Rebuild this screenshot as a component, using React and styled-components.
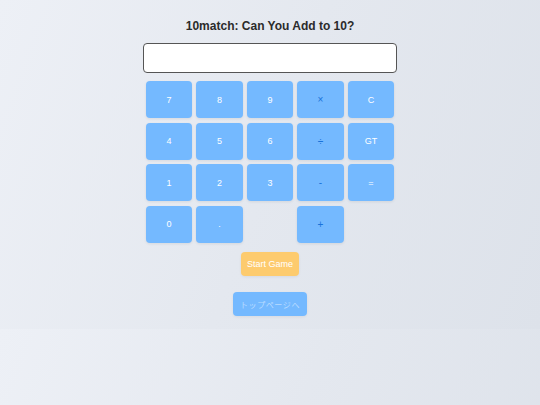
import styled, { createGlobalStyle } from "styled-components";

const GlobalStyle = createGlobalStyle`
  body {
    margin: 0;
    font-family: "Liberation Sans", Arial, "Noto Sans CJK JP", sans-serif;
    background: linear-gradient(110deg, #edf0f6 0%, #e4e8ef 50%, #dde2ea 100%);
  }
`;

const keys = [
  { label: "7" }, { label: "8" }, { label: "9" }, { label: "×", op: true }, { label: "C" },
  { label: "4" }, { label: "5" }, { label: "6" }, { label: "÷", op: true }, { label: "GT" },
  { label: "1" }, { label: "2" }, { label: "3" }, { label: "-", op: true }, { label: "=" },
  { label: "0" }, { label: "." }, { label: null }, { label: "+", op: true }, { label: null },
];

const App = () => {
  return (
    <>
      <GlobalStyle />
      <Wrapper>
        <Title>10match: Can You Add to 10?</Title>
        <Display type="text" readOnly />
        <Pad>
          {keys.map((k, i) =>
            k.label === null ? (
              <span key={i}></span>
            ) : (
              <Key key={i} $op={k.op}>
                {k.label}
              </Key>
            )
          )}
        </Pad>
        <StartButton>Start Game</StartButton>
        <TopLink>トップページへ</TopLink>
      </Wrapper>
    </>
  );
};

const Wrapper = styled.div`
  display: flex;
  flex-direction: column;
  align-items: center;
  padding: 18px 0 13px 0;
`;

const Title = styled.h1`
  margin: 0;
  font-size: 12px;
  line-height: 16px;
  font-weight: bold;
  color: #2b2b2b;
`;

const Display = styled.input`
  box-sizing: border-box;
  margin-top: 9px;
  width: 254px;
  height: 30px;
  border: 1px solid #555;
  border-radius: 4px;
  background: #fff;
  outline: none;
`;

const Pad = styled.div`
  margin-top: 8px;
  display: grid;
  grid-template-columns: repeat(5, 46.5px);
  grid-auto-rows: 37px;
  gap: 4.5px 4px;
`;

const Key = styled.button`
  border: none;
  border-radius: 4px;
  background: #74b9ff;
  color: ${(p) => (p.$op ? "#1a73d9" : "#ffffff")};
  font-family: "Liberation Sans", Arial, sans-serif;
  font-size: ${(p) => (p.$op ? "10px" : "9px")};
  box-shadow: 0 1px 3px rgba(0, 0, 0, 0.08);
  padding: 0;
  cursor: pointer;
`;

const StartButton = styled.button`
  margin-top: 9.5px;
  width: 58px;
  height: 24px;
  border: none;
  border-radius: 4px;
  background: #fdcb6e;
  color: #fff;
  font-family: "Liberation Sans", Arial, sans-serif;
  font-size: 9px;
  padding: 0;
  box-shadow: 0 1px 3px rgba(0, 0, 0, 0.06);
`;

const TopLink = styled.button`
  margin-top: 16px;
  width: 74px;
  height: 24px;
  border: none;
  border-radius: 4px;
  background: #74b9ff;
  color: rgba(255, 255, 255, 0.5);
  font-family: "Liberation Sans", "Noto Sans CJK JP", sans-serif;
  font-size: 8px;
  letter-spacing: 0.6px;
  padding: 0;
  box-shadow: 0 1px 3px rgba(0, 0, 0, 0.06);
`;

export default App;
